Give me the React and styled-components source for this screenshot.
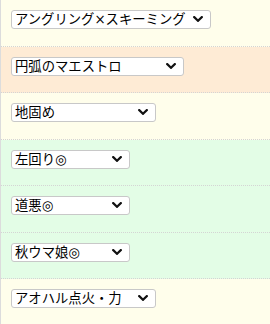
import React from 'react';
import styled, { createGlobalStyle } from 'styled-components';

const GlobalStyle = createGlobalStyle`
    html, body {
        margin: 0;
        padding: 0;
        background: #ffffff;
    }
    body {
        font-family: "Noto Sans CJK JP", "Noto Sans", sans-serif;
    }
`

const rows = [
    { label: 'アングリング×スキーミング', tone: 'yellow', width: 200 },
    { label: '円弧のマエストロ', tone: 'peach', width: 173 },
    { label: '地固め', tone: 'yellow', width: 145 },
    { label: '左回り◎', tone: 'green', width: 119 },
    { label: '道悪◎', tone: 'green', width: 119 },
    { label: '秋ウマ娘◎', tone: 'green', width: 119 },
    { label: 'アオハル点火・力', tone: 'yellow', width: 145 },
];

const tones = {
    yellow: '#fffeeb',
    peach: '#feebd5',
    green: '#e3fde6',
};

const App = () => {
    return (
        <Table>
            <GlobalStyle />
            {rows.map((row) => (
                <Row key={row.label} $tone={row.tone}>
                    <SelectWrap>
                        <Select $width={row.width} defaultValue={row.label}>
                            <option value={row.label}>{row.label}</option>
                        </Select>
                        <Chevron viewBox="0 0 10 6" aria-hidden="true">
                            <path d="M1.2 1.1 L5 4.8 L8.8 1.1" />
                        </Chevron>
                    </SelectWrap>
                </Row>
            ))}
        </Table>
    );
}

export default App;


const Table = styled.div`
    width: 270px;
    height: 324px;
    overflow: hidden;
    box-sizing: border-box;
    border-left: 1px solid #dcdcdc;
`

const Row = styled.div`
    box-sizing: border-box;
    height: 46.5px;
    padding: 10px 10px 0;
    background: ${(p) => tones[p.$tone]};
    border-bottom: 1px dotted #d4d4d4;
`

const SelectWrap = styled.div`
    position: relative;
    display: inline-block;
    vertical-align: top;
`

// ◎ comes from DejaVu so it stays small like the original
const Select = styled.select`
    appearance: none;
    -webkit-appearance: none;
    display: block;
    box-sizing: border-box;
    width: ${(p) => p.$width}px;
    height: 19px;
    margin: 0;
    padding: 0 20px 0 3px;
    border: 1px solid #c8c8c8;
    border-radius: 3px;
    background: #ffffff;
    color: #000000;
    font-family: "DejaVu Sans", "Noto Sans CJK JP", sans-serif;
    font-size: 13.33px;
    line-height: 17px;
    outline: none;
`

const Chevron = styled.svg`
    position: absolute;
    right: 8px;
    top: 6px;
    width: 10px;
    height: 6px;
    fill: none;
    stroke: #111111;
    stroke-width: 2.2;
    stroke-linecap: square;
    pointer-events: none;
`
